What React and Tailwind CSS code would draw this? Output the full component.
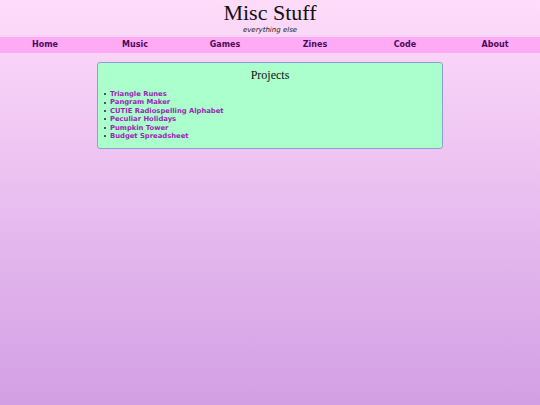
export default function App() {
  const nav = ["Home", "Music", "Games", "Zines", "Code", "About"];
  const projects = [
    "Triangle Runes",
    "Pangram Maker",
    "CUTIE Radiospelling Alphabet",
    "Peculiar Holidays",
    "Pumpkin Tower",
    "Budget Spreadsheet",
  ];
  return (
    <div className="w-full h-[405px] bg-gradient-to-b from-[#ffdcfa] to-[#d29fe4] flex flex-col">
      <header className="flex flex-col items-center">
        <h1 className="text-[22px] leading-[26px] text-[#111] [font-family:'Liberation_Serif',Georgia,serif]">
          Misc Stuff
        </h1>
        <p className="italic text-[7px] leading-[9px] text-[#222] [font-family:'DejaVu_Sans',Verdana,sans-serif]">
          everything else
        </p>
      </header>
      <nav className="mt-[2px] h-[16px] bg-[#ffaaf5] grid grid-cols-6 items-center">
        {nav.map((n) => (
          <a
            key={n}
            className="text-center font-bold text-[8px] leading-[16px] text-[#4a0a5a] [font-family:'DejaVu_Sans',Verdana,sans-serif]"
          >
            {n}
          </a>
        ))}
      </nav>
      <section className="mt-[9px] ml-[97px] w-[346px] h-[87px] bg-[#aaffcc] border border-[#8f9fd6] rounded-[3px]">
        <h2 className="text-center text-[12px] leading-[14px] mt-[5px] text-[#111] [font-family:'Liberation_Serif',Georgia,serif]">
          Projects
        </h2>
        <ul className="pl-[6px] mt-[8px] [font-family:'DejaVu_Sans',Verdana,sans-serif] text-[6.8px] leading-[8.4px] font-bold">
          {projects.map((p) => (
            <li key={p} className="flex items-center gap-[4px]">
              <span className="w-[2px] h-[2px] rounded-full bg-[#222]" />
              <a className="text-[#9b26b6]">{p}</a>
            </li>
          ))}
        </ul>
      </section>
    </div>
  );
}
